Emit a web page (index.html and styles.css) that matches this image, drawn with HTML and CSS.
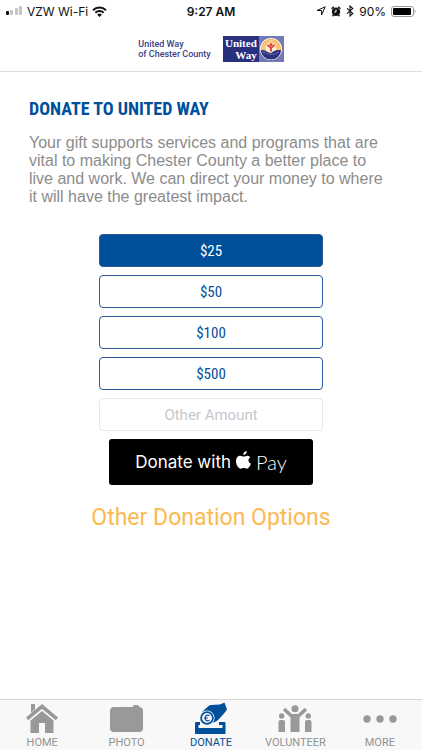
FILE: index.html
```html
<!DOCTYPE html>
<html lang="en">
<head>
    <meta charset="UTF-8">
    <meta name="viewport" content="width=device-width, initial-scale=1.0">
    <title>Donate - United Way of Chester County</title>
    <link rel="stylesheet" href="styles.css">
</head>
<body>

<div class="status-bar">
    <div class="status-left">
        <svg width="17" height="10" viewBox="0 0 17 10">
            <rect x="0" y="5" width="3" height="4" rx="1" fill="#111"/>
            <rect x="4" y="4" width="3" height="5" rx="1" fill="#c4c4c4"/>
            <rect x="9" y="2" width="3" height="7" rx="1" fill="#c4c4c4"/>
            <rect x="13" y="0" width="3" height="9" rx="1" fill="#c4c4c4"/>
        </svg>
        <span>VZW Wi-Fi</span>
        <svg width="15" height="11" viewBox="0 0 15 11" fill="none" stroke="#111" stroke-width="2">
            <path d="M1 4.2a9.3 9.3 0 0 1 13 0"/>
            <path d="M3.4 6.8a5.8 5.8 0 0 1 8.2 0"/>
            <path d="M7.5 11L5.2 8.7a3.3 3.3 0 0 1 4.6 0z" fill="#111" stroke="none"/>
        </svg>
    </div>
    <div class="status-time">9:27 AM</div>
    <div class="status-right">
        <svg width="10" height="10" viewBox="0 0 10 10">
            <path d="M9.2.8L5.6 9V4.5H1z" fill="none" stroke="#111" stroke-linejoin="round"/>
        </svg>
        <svg width="10" height="11" viewBox="0 0 10 11">
            <path d="M.6 2.8L2.8.7M9.4 2.8L7.2.7M2.5 9l-1 1.3M7.5 9l1 1.3" stroke="#111" stroke-width="1.4"/>
            <circle cx="5" cy="5.8" r="4.2" fill="#111"/>
            <path d="M5 3.4v2.6H3.2" fill="none" stroke="#fff"/>
        </svg>
        <svg width="8" height="12" viewBox="0 0 8 12">
            <path d="M1 3.3l5.8 5.2L4 11V1l2.8 2.5L1 8.7" fill="none" stroke="#111" stroke-width="1.1"/>
        </svg>
        <span>90%</span>
        <svg width="25" height="11" viewBox="0 0 25 11">
            <rect x=".5" y=".5" width="22" height="10" rx="2.5" fill="#fff" stroke="#999"/>
            <rect x="2" y="2" width="18" height="7" rx="1" fill="#000"/>
            <path d="M23.5 3.5q2 2 0 4z" fill="#999"/>
        </svg>
    </div>
</div>

<header class="header">
    <div class="org-name">United Way<br>of Chester County</div>
    <div class="logo">
        <div class="logo-name">United<br>Way</div>
        <svg width="25" height="26" viewBox="0 0 25 26">
            <rect width="25" height="26" fill="#7378b7"/>
            <circle cx="12" cy="13" r="11" fill="#fff"/>
            <circle cx="12" cy="13" r="10.2" fill="#f7b65c"/>
            <g fill="none" stroke="#fde0b0" stroke-width=".6">
                <circle cx="12" cy="13" r="8.6"/>
                <circle cx="12" cy="13" r="7"/>
            </g>
            <circle cx="12" cy="12" r="5.5" fill="#fff3dc"/>
            <path d="M1.8 14.5c2-1 4-.4 6 1l4.2 1.8c2-2.4 6-4 10.1-3A10.2 10.2 0 0 1 1.8 14.5z" fill="#29317f"/>
            <path d="M3 16c3 0 5 2.6 9 2.6s6-1.5 8-2.7" fill="none" stroke="#8f95c8" stroke-width=".6"/>
            <circle cx="12" cy="8.5" r="1.6" fill="#e4473b"/>
            <path d="M8.3 9l3.7 2.7L15.7 9M12 11v4.5" fill="none" stroke="#e4473b" stroke-width="2"/>
        </svg>
    </div>
</header>

<main class="content">
    <h1>DONATE TO UNITED WAY</h1>
    <p>Your gift supports services and programs that are vital to making Chester County a better place to live and work. We can direct your money to where it will have the greatest impact.</p>

    <form class="donate-form">
        <button type="button" class="amount selected">$25</button>
        <button type="button" class="amount">$50</button>
        <button type="button" class="amount">$100</button>
        <button type="button" class="amount">$500</button>
        <input type="text" class="other-amount" placeholder="Other Amount" aria-label="Other Amount">
        <button type="button" class="apple-pay">
            <span>Donate with</span>
            <svg width="15" height="22" viewBox="0 0 15 22" fill="#fff">
                <path d="M10.8 0c.2 1.9-1.5 4-3.5 4C7 2.1 8.8.2 10.8 0z"/>
                <path d="M14.3 6.3c-2.7 1.7-2.3 5.2.6 6.4-.8 2.3-2.4 5-4.1 5-1.2 0-1.700-.7-3-.7-1.400 0-1.900.7-3 .7C2.500 17.700 0 13.800 0 10.300c0-3.700 2.200-5.500 4.400-5.500 1.400 0 2.400.8 3.300.8.900 0 2-.9 3.700-.9 1.100 0 2.200.6 2.900 1.600z"/>
            </svg>
            <span class="pay">Pay</span>
        </button>
    </form>

    <a href="#" class="other-options">Other Donation Options</a>
</main>

<nav class="tab-bar">
    <a href="#" class="tab">
        <svg width="32" height="30" viewBox="0 0 32 30" fill="#999">
            <path d="M5 0h4v5l-4 4z"/>
            <path d="M16 0L0 13.5l2.2 2.7L16 4.7l13.8 11.5 2.2-2.7z"/>
            <path d="M16 7L4.5 16.5V29H13V19h6v10h8.500V16.5z"/>
        </svg>
        <span>HOME</span>
    </a>
    <a href="#" class="tab">
        <svg width="34" height="30" viewBox="0 0 34 30" fill="#999">
            <rect x="0" y="3" width="33" height="25" rx="4"/>
            <path d="M22 5c1-4 2-4 4-4s4 0 4 5z"/>
        </svg>
        <span>PHOTO</span>
    </a>
    <a href="#" class="tab active">
        <svg width="34" height="34" viewBox="0 0 34 34" fill="#004f9a">
            <path d="M1 23q0-1 1-1h4v3H4.500v3h24v-3H25v-3h5.500q1 0 1 1v11H1z"/>
            <path d="M8 12l6.500-6q1-1 3-1l8.500-.5L30.500 2.500 33 9.500l-3 4-5 5.500q-3 3.500-8 4z"/>
            <circle cx="13" cy="18" r="7.600" fill="#f8f8f8"/>
            <circle cx="13" cy="18" r="5.900" fill="none" stroke="#004f9a" stroke-width="1.800"/>
            <path d="M15.500 15.800c-2-1.500-4.400-.3-4.400 2.200s2.400 3.700 4.400 2.200M10 18h4" fill="none" stroke="#004f9a" stroke-width="1.200"/>
        </svg>
        <span>DONATE</span>
    </a>
    <a href="#" class="tab">
        <svg width="34" height="29" viewBox="0 0 34 29" fill="#999">
            <circle cx="17" cy="3.7" r="3.5"/>
            <circle cx="3.7" cy="11" r="2.7"/>
            <circle cx="30.3" cy="11" r="2.7"/>
            <path d="M6 4l7.500 7h7L28 4" fill="none" stroke="#999" stroke-width="3.600"/>
            <path d="M12.500 9h9v18h-9z"/>
            <path d="M.5 27V17q0-2 2-2h2.500q2 0 2 2v10zM27 27V17q0-2 2-2h2.500q2 0 2 2v10z"/>
        </svg>
        <span>VOLUNTEER</span>
    </a>
    <a href="#" class="tab">
        <svg width="34" height="30" viewBox="0 0 34 30" fill="#999">
            <circle cx="4" cy="15" r="3.700"/>
            <circle cx="17" cy="15" r="3.700"/>
            <circle cx="30" cy="15" r="3.700"/>
        </svg>
        <span>MORE</span>
    </a>
</nav>

</body>
</html>
```
FILE: styles.css
```css
* {
    box-sizing: border-box;
}
body {
    font-family: Roboto, sans-serif;
    display: flex;
    flex-direction: column;
    min-height: 100vh;
    margin: 0;
    background: white;
}
a {
    text-decoration: none;
}
svg {
    display: block;
    flex: none;
}
.status-bar {
    display: grid;
    grid-template-columns: 1fr auto 1fr;
    align-items: center;
    height: 22px;
    padding: 0 6px;
    font: 12px Inter, sans-serif;
    color: #111;
}
.status-left,
.status-right {
    display: flex;
    align-items: center;
    gap: 4px;
}
.status-right {
    justify-content: flex-end;
    gap: 5px;
}
.status-time {
    font-weight: 600;
}
.header {
    display: flex;
    justify-content: center;
    align-items: center;
    gap: 12px;
    height: 50px;
    padding-top: 4px;
    border-bottom: 1px solid #ddd;
}
.org-name {
    font-size: 9px;
    font-weight: 500;
    line-height: 10px;
    color: #3b4189;
}
.logo {
    display: flex;
    background: #29317f;
}
.logo-name {
    width: 36px;
    padding-right: 2px;
    font: bold 11px/12px "Liberation Serif", serif;
    text-align: right;
    color: white;
    align-self: center;
}
.content {
    flex: 1;
    display: flex;
    flex-direction: column;
    align-items: center;
    padding: 24px 29px;
}
h1 {
    align-self: stretch;
    margin: 0 0 12px;
    font: bold 18px/26px "Roboto Condensed", "Liberation Sans Narrow", sans-serif;
    color: #004f9a;
}
.content p {
    align-self: stretch;
    margin: 0 0 28px;
    font: 16px/18px "Liberation Sans", Arial, sans-serif;
    color: #8c8c8c;
}
.donate-form {
    display: flex;
    flex-direction: column;
    align-items: center;
    gap: 8px;
    width: 224px;
}
.amount,
.other-amount {
    width: 100%;
    height: 33px;
    padding: 0;
    border: 1px solid #2c5a99;
    border-radius: 4px;
    background: white;
    font: 15px "Roboto Condensed", Roboto, sans-serif;
    text-align: center;
    color: #004f9a;
}
.amount.selected {
    background: #004f9a;
    color: white;
}
.other-amount {
    border-color: #e6e6e6;
    font-family: Roboto, sans-serif;
}
.other-amount::placeholder {
    color: #c7c7cc;
}
.apple-pay {
    display: flex;
    justify-content: center;
    align-items: center;
    gap: 5px;
    width: 204px;
    height: 46px;
    padding: 0;
    border: 0;
    border-radius: 3px;
    background: black;
    font: 17px Inter, sans-serif;
    color: white;
}
.pay {
    font: 300 20px Lato, sans-serif;
}
.other-options {
    margin-top: 18px;
    font-size: 23px;
    line-height: 30px;
    color: #fcb950;
}
.tab-bar {
    display: flex;
    height: 51px;
    border-top: 1px solid #d8d8d8;
    background: #f8f8f8;
}
.tab {
    flex: 1;
    display: flex;
    flex-direction: column;
    align-items: center;
    justify-content: flex-end;
    gap: 2px;
    padding-bottom: 1px;
    font-size: 11px;
    line-height: 13px;
    color: #929292;
}
.tab.active {
    color: #004f9a;
}
```
